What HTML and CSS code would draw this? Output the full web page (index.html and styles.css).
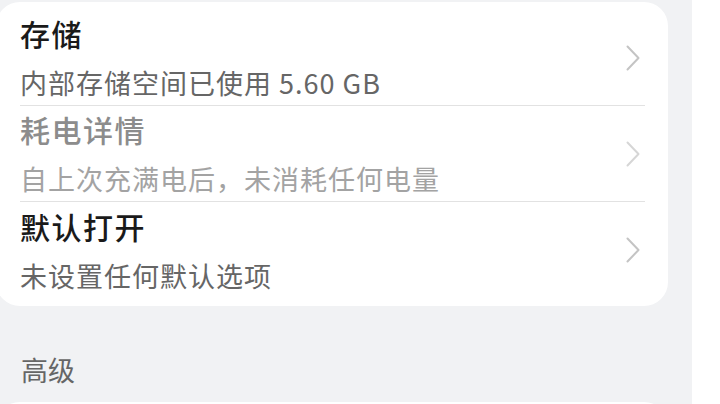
FILE: index.html
```html
<!DOCTYPE html>
<html lang="zh-CN">
<head>
<meta charset="utf-8">
<link rel="stylesheet" href="styles.css">
</head>
<body>
<div class="screen">
  <div class="pane">
    <div class="card">
      <div class="row">
        <div class="texts">
          <div class="title">存储</div>
          <div class="sub">内部存储空间已使用 5.60 GB</div>
        </div>
        <svg class="chev" width="14" height="26" viewBox="0 0 14 26"><path d="M1.5 1.5 L12.5 13 L1.5 24.5" fill="none" stroke="#c4c4c4" stroke-width="2" stroke-linecap="round" stroke-linejoin="round"/></svg>
      </div>
      <div class="row disabled">
        <div class="texts">
          <div class="title">耗电详情</div>
          <div class="sub">自上次充满电后，未消耗任何电量</div>
        </div>
        <svg class="chev" width="14" height="26" viewBox="0 0 14 26"><path d="M1.5 1.5 L12.5 13 L1.5 24.5" fill="none" stroke="#d6d6d6" stroke-width="2" stroke-linecap="round" stroke-linejoin="round"/></svg>
      </div>
      <div class="row last">
        <div class="texts">
          <div class="title">默认打开</div>
          <div class="sub">未设置任何默认选项</div>
        </div>
        <svg class="chev" width="14" height="26" viewBox="0 0 14 26"><path d="M1.5 1.5 L12.5 13 L1.5 24.5" fill="none" stroke="#c4c4c4" stroke-width="2" stroke-linecap="round" stroke-linejoin="round"/></svg>
      </div>
    </div>
    <div class="section">高级</div>
    <div class="card next"></div>
  </div>
  <div class="side"></div>
</div>
</body>
</html>
```
FILE: styles.css
```css
html, body {
  margin: 0;
  padding: 0;
  background: #ffffff;
  font-family: "Noto Sans CJK SC", "Noto Sans", sans-serif;
}
.screen {
  display: flex;
  width: 720px;
  height: 404px;
  overflow: hidden;
}
.pane {
  width: 692px;
  flex: none;
  background: #f1f2f4;
  padding-top: 2px;
  box-sizing: border-box;
}
.side {
  flex: 1;
  background: #ffffff;
}
.card {
  background: #ffffff;
  border-radius: 24px;
  margin-left: -4px;
  width: 672px;
  padding: 8px 0;
  box-sizing: border-box;
}
.row {
  display: flex;
  align-items: center;
  margin-left: 24px;
  margin-right: 23px;
  height: 96px;
  border-bottom: 1px solid #e2e2e2;
  box-sizing: border-box;
}
.row.last {
  border-bottom: none;
}
.texts {
  flex: 1;
  display: flex;
  flex-direction: column;
  gap: 12px;
  padding-bottom: 1px;
}
.title {
  font-size: 30px;
  line-height: 40px;
  letter-spacing: 1.5px;
  color: #1a1a1a;
  font-weight: 500;
}
.sub {
  font-size: 27px;
  line-height: 36px;
  letter-spacing: 1px;
  color: #666666;
}
.disabled .title {
  color: #8c8c8c;
}
.disabled .sub {
  color: #a3a3a3;
}
.chev {
  flex: none;
  margin-right: 5px;
}
.section {
  padding: 46px 0 14px 21px;
  font-size: 27px;
  line-height: 36px;
  color: #666666;
}
.card.next {
  height: 60px;
  padding: 0;
}
```
